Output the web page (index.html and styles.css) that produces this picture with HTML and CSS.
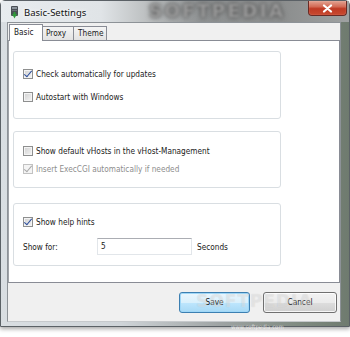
FILE: index.html
```html
<!DOCTYPE html>
<html>
<head>
<meta charset="utf-8">
<link rel="stylesheet" href="styles.css">
</head>
<body>
<div class="window">
  <div class="titlebar">
    <svg class="appicon" width="9" height="13" viewBox="0 0 9 13">
      <rect x="1" y="0" width="7" height="10" rx="1" fill="#4a4f55"/>
      <rect x="2" y="1" width="5" height="2" fill="#8b939b"/>
      <rect x="2" y="4" width="5" height="1" fill="#6b737b"/>
      <path d="M2 8 L7 8 L4.5 12.5 Z" fill="#2f9a3a"/>
      <rect x="3.5" y="6" width="2" height="3" fill="#2f9a3a"/>
    </svg>
    <span class="title">Basic-Settings</span>
    <span class="watermark">SOFTPEDIA</span>
    <div class="close">
      <svg width="11" height="9" viewBox="0 0 11 9"><path d="M2 1.5 L9 7.5 M9 1.5 L2 7.5" stroke="#fff" stroke-width="2.2" stroke-linecap="round"/></svg>
    </div>
  </div>
  <div class="frame">
    <div class="client">
      <div class="tabs">
        <div class="tab active">Basic</div>
        <div class="tab">Proxy</div>
        <div class="tab">Theme</div>
      </div>
      <div class="page">
        <div class="group g1">
          <div class="row"><span class="cb checked"></span><span>Check automatically for updates</span></div>
          <div class="row"><span class="cb"></span><span>Autostart with Windows</span></div>
        </div>
        <div class="group g2">
          <div class="row"><span class="cb"></span><span>Show default vHosts in the vHost-Management</span></div>
          <div class="row disabled"><span class="cb checked dis"></span><span>Insert ExecCGI automatically if needed</span></div>
        </div>
        <div class="group g3">
          <div class="row"><span class="cb checked"></span><span>Show help hints</span></div>
          <div class="row field"><span class="lbl">Show for:</span><span class="input">5</span><span class="unit">Seconds</span></div>
        </div>
      </div>
      <div class="buttons">
        <div class="btn default">Save</div>
        <div class="btn">Cancel</div>
      </div>
    </div>
  </div>
  <div class="site">www.softpedia.com</div>
</div>
</body>
</html>
```

FILE: styles.css
```css
html, body {
  margin: 0;
  padding: 0;
  background: #ffffff;
}
body {
  width: 350px;
  height: 337px;
  overflow: hidden;
  font-family: "DejaVu Sans Condensed", "DejaVu Sans", sans-serif;
  font-stretch: condensed;
  font-size: 8.2px;
  color: #1a1a1a;
}
.window {
  position: relative;
  width: 350px;
  height: 327px;
  box-sizing: border-box;
  border: 1px solid #5b6166;
  border-radius: 5px 5px 0 0;
  background: linear-gradient(to right, #d9dee2 0, #cfd4d8 120px, #9ea3a3 220px, #7f8a80 300px, #6e7a6e 350px);
  box-shadow: 0 2px 4px rgba(0,0,0,0.35);
  display: flex;
  flex-direction: column;
}
.titlebar {
  position: relative;
  height: 21px;
  display: flex;
  align-items: flex-start;
  background: linear-gradient(to right, #e8ecef 0, #e0e4e7 100px, #b9bcbd 150px, #8e9192 200px, #8b8d8d 280px, #9fa2a2 350px);
  overflow: hidden;
}
.appicon {
  margin: 5px 0 0 9px;
  flex: none;
}
.title {
  margin: 6px 0 0 5px;
  font-family: "Noto Sans", "DejaVu Sans", sans-serif;
  font-stretch: normal;
  font-size: 9.5px;
  line-height: 12px;
  color: #111;
  text-shadow: 0 0 6px #fff, 0 0 3px #fff;
}
.watermark {
  position: absolute;
  left: 148px;
  top: 0;
  font-family: "DejaVu Sans", sans-serif;
  font-stretch: normal;
  font-weight: bold;
  font-size: 18px;
  line-height: 20px;
  letter-spacing: 2.5px;
  color: rgba(200,200,200,0.7);
  text-shadow: 0 0 2px #333, 0 0 4px #444;
  filter: blur(1.4px);
}
.close {
  position: relative;
  margin-left: auto;
  margin-right: 2px;
  width: 39px;
  height: 15px;
  box-sizing: border-box;
  border: 1px solid #6a2a24;
  border-top: none;
  border-radius: 0 0 4px 4px;
  background: linear-gradient(to bottom, #e3a392 0, #d36b56 40%, #bf3a24 55%, #c84a30 100%);
  box-shadow: inset 0 0 1px rgba(255,255,255,0.6);
  display: flex;
  align-items: center;
  justify-content: center;
}
.frame {
  flex: 1;
  padding: 0 8px 4px 6px;
  display: flex;
}
.client {
  flex: 1;
  background: #f0f0f0;
  border: 1px solid #8d9297;
  border-bottom-color: #c6c9cc;
  display: flex;
  flex-direction: column;
  position: relative;
}
.tabs {
  height: 17px;
  display: flex;
  align-items: flex-end;
  padding-left: 1px;
  position: relative;
  z-index: 2;
}
.tab {
  box-sizing: border-box;
  height: 14px;
  border: 1px solid #898c95;
  border-bottom: none;
  background: linear-gradient(to bottom, #f5f5f5, #e2e2e2);
  padding: 0 4px;
  line-height: 13px;
  margin-left: -1px;
  margin-bottom: 0;
  color: #1a1a1a;
}
.tab:first-child { margin-left: 0; }
.tab.active {
  height: 17px;
  margin-bottom: -1px;
  background: #ffffff;
  padding: 0 4px 0 4px;
  line-height: 14px;
  width: 34px;
  z-index: 3;
}
.tab:nth-child(2) { width: 32px; padding-left: 3px; }
.tab:nth-child(3) { width: 34px; padding-left: 4px; }
.page {
  height: 243px;
  box-sizing: border-box;
  background: #ffffff;
  border: 1px solid #898c95;
  border-left-color: #a0a3a8;
  position: relative;
  z-index: 1;
  padding: 10px 0 0 4px;
}
.group {
  width: 268px;
  box-sizing: border-box;
  border: 1px solid #d9dee2;
  border-radius: 3px;
  padding-left: 9px;
  display: flex;
  flex-direction: column;
}
.g1 { height: 68px; padding-top: 16px; gap: 11px; }
.g2 { height: 57px; margin-top: 12px; padding-top: 13px; gap: 6px; }
.g3 { height: 63px; margin-top: 15px; padding-top: 12px; gap: 10px; }
.row {
  height: 12px;
  display: flex;
  align-items: center;
  line-height: 12px;
  white-space: nowrap;
}
.row.disabled { color: #8d8d8d; }
.cb {
  flex: none;
  width: 10px;
  height: 10px;
  box-sizing: border-box;
  border: 1px solid #8e8f8f;
  background: linear-gradient(135deg, #d0d0d0, #f4f4f4);
  box-shadow: inset 0 0 0 1px #f4f4f4;
  margin-right: 3px;
  position: relative;
}
.cb.checked::after {
  content: "";
  position: absolute;
  left: 2px;
  top: -1px;
  width: 3px;
  height: 7px;
  border: solid #2a4d9c;
  border-width: 0 1.5px 1.5px 0;
  transform: rotate(40deg);
}
.cb.dis {
  border-color: #c2c2c2;
  background: #f4f4f4;
}
.cb.dis::after { border-color: #a8a8a8; }
.field { height: 17px; }
.lbl { width: 74px; }
.input {
  width: 95px;
  height: 17px;
  box-sizing: border-box;
  border: 1px solid #e2e6ea;
  border-top-color: #abadb3;
  background: #fff;
  padding-left: 3px;
  line-height: 15px;
  margin-right: 5px;
}
.buttons {
  flex: 1;
  display: flex;
  justify-content: flex-end;
  align-items: flex-start;
  padding: 9px 3px 0 0;
  gap: 13px;
  position: relative;
}
.buttons::after {
  content: "SOFTPEDIA";
  position: absolute;
  left: 188px;
  top: 8px;
  font-family: "DejaVu Sans", sans-serif;
  font-stretch: normal;
  font-weight: bold;
  font-size: 17px;
  letter-spacing: 1px;
  color: rgba(255,255,255,0.35);
  text-shadow: 0 0 1px rgba(0,0,0,0.12);
  pointer-events: none;
}
.btn {
  box-sizing: border-box;
  height: 21px;
  border: 1px solid #707070;
  border-radius: 3px;
  background: linear-gradient(to bottom, #f2f2f2 0, #ebebeb 50%, #dddddd 51%, #cfcfcf 100%);
  box-shadow: inset 0 0 0 1px rgba(255,255,255,0.8);
  text-align: center;
  line-height: 19px;
  width: 74px;
}
.btn.default {
  width: 71px;
  border-color: #3c7fb1;
  background: linear-gradient(to bottom, #eaf6fd 0, #d9f0fc 50%, #bee6fd 51%, #a7d9f5 100%);
  box-shadow: inset 0 0 0 1px #9fd7f7;
}
.site {
  position: absolute;
  left: 230px;
  top: 322px;
  font-size: 6px;
  color: rgba(255,255,255,0.7);
}
```
